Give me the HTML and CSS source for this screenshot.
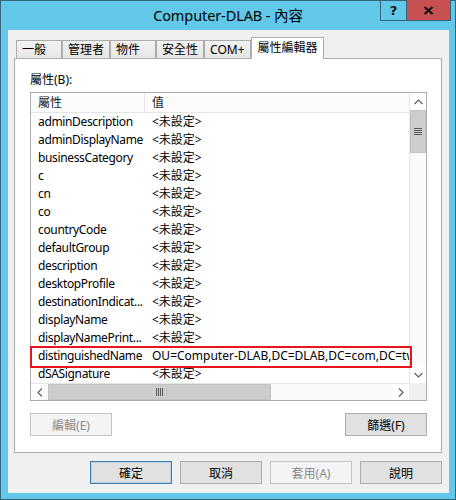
FILE: index.html
```html
<!DOCTYPE html>
<html lang="zh-Hant">
<head>
<meta charset="utf-8">
<title>Computer-DLAB - 內容</title>
<link rel="stylesheet" href="styles.css">
</head>
<body>
<div class="window">
  <div class="titlebar">
    <div class="title">Computer-DLAB - 內容</div>
    <div class="controls">
      <div class="btn-help">?</div>
      <div class="btn-close">
        <svg width="11" height="9" viewBox="0 0 11 9"><path d="M1.5 1 L9.5 8 M9.5 1 L1.5 8" stroke="#111" stroke-width="2.2" fill="none"/></svg>
      </div>
    </div>
  </div>
  <div class="client">
    <div class="tabs">
      <div class="tab">一般</div>
      <div class="tab">管理者</div>
      <div class="tab">物件</div>
      <div class="tab">安全性</div>
      <div class="tab">COM+</div>
      <div class="tab active">屬性編輯器</div>
    </div>
    <div class="panel">
      <div class="label">屬性(B):</div>
      <div class="listbox">
        <div class="lb-main">
          <div class="lb-content">
            <div class="lb-head">
              <div class="c1">屬性</div>
              <div class="c2">值</div>
            </div>
            <div class="row"><div class="c1">adminDescription</div><div class="c2">&lt;未設定&gt;</div></div>
            <div class="row"><div class="c1">adminDisplayName</div><div class="c2">&lt;未設定&gt;</div></div>
            <div class="row"><div class="c1">businessCategory</div><div class="c2">&lt;未設定&gt;</div></div>
            <div class="row"><div class="c1">c</div><div class="c2">&lt;未設定&gt;</div></div>
            <div class="row"><div class="c1">cn</div><div class="c2">&lt;未設定&gt;</div></div>
            <div class="row"><div class="c1">co</div><div class="c2">&lt;未設定&gt;</div></div>
            <div class="row"><div class="c1">countryCode</div><div class="c2">&lt;未設定&gt;</div></div>
            <div class="row"><div class="c1">defaultGroup</div><div class="c2">&lt;未設定&gt;</div></div>
            <div class="row"><div class="c1">description</div><div class="c2">&lt;未設定&gt;</div></div>
            <div class="row"><div class="c1">desktopProfile</div><div class="c2">&lt;未設定&gt;</div></div>
            <div class="row"><div class="c1">destinationIndicat...</div><div class="c2">&lt;未設定&gt;</div></div>
            <div class="row"><div class="c1">displayName</div><div class="c2">&lt;未設定&gt;</div></div>
            <div class="row"><div class="c1">displayNamePrint...</div><div class="c2">&lt;未設定&gt;</div></div>
            <div class="row marked"><div class="c1">distinguishedName</div><div class="c2">OU=Computer-DLAB,DC=DLAB,DC=com,DC=tw</div></div>
            <div class="row"><div class="c1">dSASignature</div><div class="c2">&lt;未設定&gt;</div></div>
          </div>
          <div class="vscroll">
            <div class="sb-btn">
              <svg width="9" height="6" viewBox="0 0 9 6"><path d="M0.5 5 L4.5 1 L8.5 5" stroke="#606060" stroke-width="1.2" fill="none"/></svg>
            </div>
            <div class="v-thumb">
              <svg width="8" height="8" viewBox="0 0 8 8"><path d="M0 0.5 H8 M0 2.5 H8 M0 4.5 H8 M0 6.5 H8" stroke="#5a5a5a" stroke-width="1" fill="none"/></svg>
            </div>
            <div class="sb-track"></div>
            <div class="sb-btn">
              <svg width="9" height="6" viewBox="0 0 9 6"><path d="M0.5 1 L4.5 5 L8.5 1" stroke="#606060" stroke-width="1.2" fill="none"/></svg>
            </div>
          </div>
        </div>
        <div class="lb-foot">
          <div class="hscroll">
            <div class="sb-btn">
              <svg width="6" height="9" viewBox="0 0 6 9"><path d="M5 0.5 L1 4.5 L5 8.5" stroke="#606060" stroke-width="1.2" fill="none"/></svg>
            </div>
            <div class="h-thumb">
              <svg width="8" height="8" viewBox="0 0 8 8"><path d="M0.5 0 V8 M2.5 0 V8 M4.5 0 V8 M6.5 0 V8" stroke="#5a5a5a" stroke-width="1" fill="none"/></svg>
            </div>
            <div class="sb-track"></div>
            <div class="sb-btn">
              <svg width="6" height="9" viewBox="0 0 6 9"><path d="M1 0.5 L5 4.5 L1 8.5" stroke="#606060" stroke-width="1.2" fill="none"/></svg>
            </div>
          </div>
          <div class="corner"></div>
        </div>
      </div>
      <div class="panel-buttons">
        <button class="btn" disabled>編輯(E)</button>
        <button class="btn">篩選(F)</button>
      </div>
    </div>
    <div class="dialog-buttons">
      <button class="btn default">確定</button>
      <button class="btn">取消</button>
      <button class="btn" disabled>套用(A)</button>
      <button class="btn">說明</button>
    </div>
  </div>
</div>
</body>
</html>
```

FILE: styles.css
```css
* { box-sizing: border-box; }
html, body { margin: 0; padding: 0; }
body {
  width: 456px;
  height: 500px;
  overflow: hidden;
  font-family: "Noto Sans", "Noto Sans CJK TC", sans-serif;
  font-size: 12px;
  color: #000;
  background: #fff;
}
.window {
  width: 456px;
  height: 500px;
  border: 1px solid #33657c;
  background: #61c8ea;
  display: flex;
  flex-direction: column;
}
.titlebar {
  flex: none;
  height: 29px;
  display: grid;
  grid-template-columns: 1fr auto 1fr;
}
.title {
  grid-column: 2;
  font-size: 14.5px;
  line-height: 29px;
  color: #000;
  white-space: nowrap;
  letter-spacing: -0.1px;
}
.controls {
  grid-column: 3;
  justify-self: end;
  align-self: start;
  display: flex;
  margin-top: -1px;
  margin-right: 4px;
}
.btn-help {
  width: 26px;
  height: 21px;
  border: 1px solid #33657c;
  border-right: none;
  border-top: none;
  display: flex;
  align-items: center;
  justify-content: center;
  font-family: "DejaVu Sans", sans-serif;
  font-weight: bold;
  font-size: 13px;
  color: #111;
}
.btn-close {
  width: 45px;
  height: 21px;
  background: #c75050;
  border: 1px solid #33657c;
  border-top: none;
  display: flex;
  align-items: center;
  justify-content: center;
}
.client {
  flex: 1;
  margin: 0 6px 6px 7px;
  background: #f0f0f0;
  padding: 7px 7px 0 6px;
  display: flex;
  flex-direction: column;
}
.tabs {
  display: flex;
  align-items: flex-end;
  height: 22px;
  margin-left: 2px;
}
.tab {
  height: 19px;
  min-width: 46px;
  padding: 0 5px;
  border: 1px solid #acacac;
  border-bottom: none;
  background: linear-gradient(#f2f2f2, #e6e6e6);
  line-height: 17px;
  white-space: nowrap;
}
.tab.active {
  height: 22px;
  padding: 0 5px 0 6px;
  background: #fff;
  line-height: 20px;
  position: relative;
  z-index: 2;
}
.panel {
  position: relative;
  z-index: 1;
  margin-top: -1px;
  height: 395px;
  background: #fff;
  border: 1px solid #acacac;
  padding: 13px 14px 0 15px;
}
.label {
  line-height: 16px;
  margin-bottom: 4px;
}
.listbox {
  border: 1px solid #abadb3;
  display: flex;
  flex-direction: column;
}
.lb-main {
  display: flex;
  height: 290px;
}
.lb-content {
  flex: 1;
  min-width: 0;
}
.lb-head {
  display: flex;
  height: 20px;
  line-height: 19px;
  background: #fcfcfc;
  border-bottom: 1px solid #e5e5e5;
  color: #222;
}
.lb-head .c1 {
  border-right: 1px solid #e5e5e5;
}
.c1 {
  width: 114px;
  flex: none;
  padding-left: 7px;
  white-space: nowrap;
  overflow: hidden;
}
.row .c1 {
  letter-spacing: -0.35px;
}
.c2 {
  flex: 1;
  min-width: 0;
  padding-left: 7px;
  white-space: nowrap;
  overflow: hidden;
}
.row {
  display: flex;
  height: 18px;
  line-height: 18px;
}
.row.marked {
  position: relative;
}
.row.marked::after {
  content: "";
  position: absolute;
  top: -1px;
  bottom: -3px;
  left: -1px;
  right: -3px;
  border: 2px solid #e8141e;
  z-index: 3;
  pointer-events: none;
}
.vscroll {
  width: 17px;
  flex: none;
  display: flex;
  flex-direction: column;
  background: #fafafa;
  border-left: 1px solid #e6e6e6;
}
.sb-btn {
  flex: none;
  width: 16px;
  height: 17px;
  display: flex;
  align-items: center;
  justify-content: center;
  background: #fff;
}
.v-thumb {
  flex: none;
  height: 43px;
  background: #cdcdcd;
  border: 1px solid #c3c3c3;
  display: flex;
  align-items: center;
  justify-content: center;
}
.sb-track {
  flex: 1;
}
.lb-foot {
  display: flex;
  height: 17px;
}
.hscroll {
  flex: 1;
  display: flex;
  background: #fafafa;
  border-top: 1px solid #e6e6e6;
}
.hscroll .sb-btn {
  width: 17px;
  height: 16px;
}
.h-thumb {
  flex: none;
  width: 223px;
  background: #cdcdcd;
  border: 1px solid #c3c3c3;
  display: flex;
  align-items: center;
  justify-content: center;
}
.corner {
  width: 17px;
  flex: none;
  background: #f0f0f0;
}
.panel-buttons {
  display: flex;
  justify-content: space-between;
  margin-top: 12px;
}
.btn {
  width: 82px;
  height: 23px;
  border: 1px solid #adadad;
  background: #e1e1e1;
  font-family: "Noto Sans", "Noto Sans CJK TC", sans-serif;
  font-size: 12px;
  color: #000;
  padding: 0;
  margin: 0;
}
.btn:disabled {
  background: #f4f4f4;
  border-color: #c5c5c5;
  color: #8a8a8a;
}
.btn.default {
  border-color: #3c7fb1;
  box-shadow: inset 0 0 0 1px #b7d0e6;
}
.dialog-buttons {
  display: flex;
  justify-content: flex-end;
  gap: 8px;
  margin-top: 8px;
}
```
